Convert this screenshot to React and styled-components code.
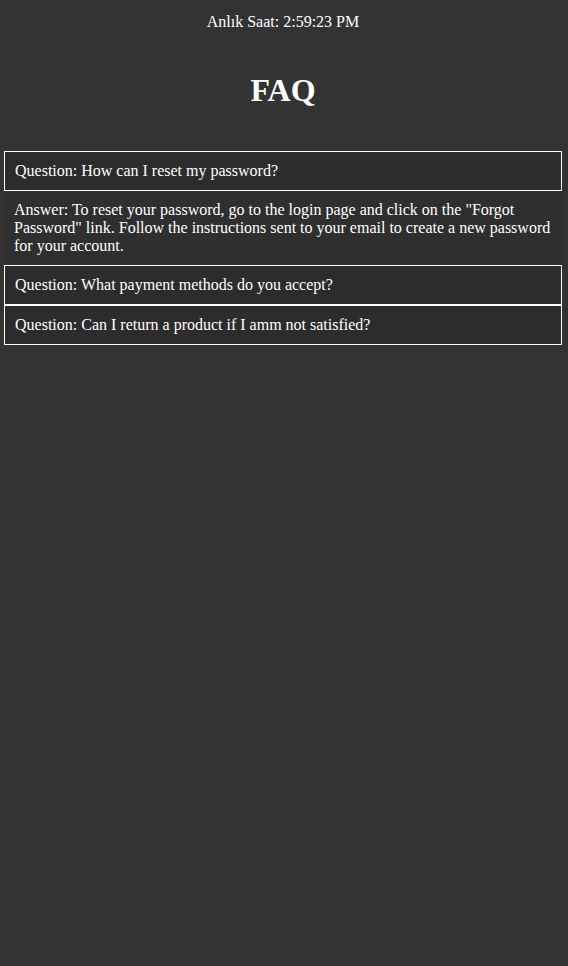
import React from 'react';
import styled, { createGlobalStyle } from 'styled-components';

const GlobalStyle = createGlobalStyle`
  html, body {
    margin: 0;
    padding: 0;
    background-color: #333333;
  }

  body {
    font-family: "Liberation Serif", "Times New Roman", serif;
    font-size: 16px;
    color: #ffffff;
  }
`;

const Page = styled.div`
  min-height: 966px;
  background-color: #333333;
  padding: 0 6px 0 4px;
  box-sizing: border-box;
`;

const Clock = styled.p`
  margin: 0;
  padding-top: 13px;
  line-height: 18px;
  text-align: center;
  color: #ffffff;
`;

const Title = styled.h1`
  margin: 41px 0 42px;
  font-size: 32px;
  line-height: 37px;
  font-weight: bold;
  text-align: center;
  color: #ffffff;
`;

const List = styled.div`
  display: flex;
  flex-direction: column;
  width: 558px;
`;

const Question = styled.div`
  border: 1px solid #ffffff;
  background-color: #2c2c2c;
  padding: 10px;
  line-height: 18px;
  cursor: pointer;
`;

const Answer = styled.div`
  background-color: #2f2f2f;
  padding: 10px;
  line-height: 18px;
`;

const faqs = [
  {
    q: 'How can I reset my password?',
    a: 'To reset your password, go to the login page and click on the "Forgot Password" link. Follow the instructions sent to your email to create a new password for your account.',
    open: true,
  },
  { q: 'What payment methods do you accept?', a: '', open: false },
  { q: 'Can I return a product if I amm not satisfied?', a: '', open: false },
];

export default function App() {
  return (
    <>
      <GlobalStyle />
      <Page>
        <Clock>Anlık Saat: 2:59:23 PM</Clock>
        <Title>FAQ</Title>
        <List>
          {faqs.map((item) => (
            <React.Fragment key={item.q}>
              <Question>Question: {item.q}</Question>
              {item.open && <Answer>Answer: {item.a}</Answer>}
            </React.Fragment>
          ))}
        </List>
      </Page>
    </>
  );
}
